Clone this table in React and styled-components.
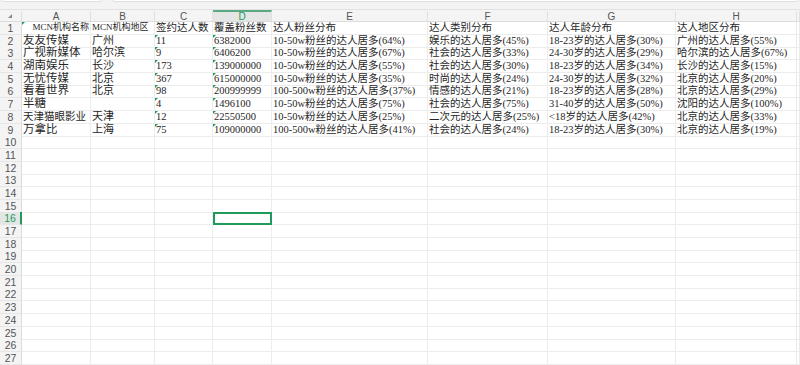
import React from 'react'
import styled, { createGlobalStyle } from 'styled-components'

const GlobalStyle = createGlobalStyle`
  html, body { margin: 0; padding: 0; background: #fff; }
  body { overflow: hidden; }
`

const COLS = '22px 69px 64px 58px 59px 156px 120px 128px 121px 1fr'
const LETTERS = ['A', 'B', 'C', 'D', 'E', 'F', 'G', 'H', '']
const ROW_H = 12.7
const GREEN = '#1f9a5a'

const rows = [
  ['MCN机构名称', 'MCN机构地区', '签约达人数', '覆盖粉丝数', '达人粉丝分布', '达人类别分布', '达人年龄分布', '达人地区分布'],
  ['友友传媒', '广州', '11', '6382000', '10-50w粉丝的达人居多(64%)', '娱乐的达人居多(45%)', '18-23岁的达人居多(30%)', '广州的达人居多(55%)'],
  ['广视新媒体', '哈尔滨', '9', '6406200', '10-50w粉丝的达人居多(67%)', '社会的达人居多(33%)', '24-30岁的达人居多(29%)', '哈尔滨的达人居多(67%)'],
  ['湖南娱乐', '长沙', '173', '139000000', '10-50w粉丝的达人居多(55%)', '社会的达人居多(30%)', '18-23岁的达人居多(34%)', '长沙的达人居多(15%)'],
  ['无忧传媒', '北京', '367', '615000000', '10-50w粉丝的达人居多(35%)', '时尚的达人居多(24%)', '24-30岁的达人居多(32%)', '北京的达人居多(20%)'],
  ['看看世界', '北京', '98', '200999999', '100-500w粉丝的达人居多(37%)', '情感的达人居多(21%)', '18-23岁的达人居多(28%)', '北京的达人居多(29%)'],
  ['半糖', '', '4', '1496100', '10-50w粉丝的达人居多(75%)', '社会的达人居多(75%)', '31-40岁的达人居多(50%)', '沈阳的达人居多(100%)'],
  ['天津猫眼影业', '天津', '12', '22550500', '10-50w粉丝的达人居多(25%)', '二次元的达人居多(25%)', '<18岁的达人居多(42%)', '北京的达人居多(33%)'],
  ['万拿比', '上海', '75', '109000000', '100-500w粉丝的达人居多(41%)', '社会的达人居多(24%)', '18-23岁的达人居多(30%)', '北京的达人居多(19%)'],
]

const Sheet = styled.div`
  width: 800px;
  height: 365px;
  overflow: hidden;
  background: #fff;
  font-family: "Liberation Serif", "Noto Sans CJK SC", serif;
`

const Toolbar = styled.div`
  display: flex;
  align-items: flex-end;
  gap: 8px;
  height: 10px;
  padding-bottom: 7px;
  box-sizing: border-box;
  background: #f3f3f3;
  overflow: hidden;
  border-bottom: 1px solid #e2e2e2;
`

const NameBox = styled.div`
  flex: 0 0 103px;
  height: 20px;
  background: #fff;
  border: 1px solid #dedede;
  border-radius: 4px;
  box-sizing: border-box;
`

const FormulaBox = styled(NameBox)`
  flex: 1;
`

const Row = styled.div`
  display: grid;
  grid-template-columns: ${COLS};
  height: ${p => p.$h}px;
`

const HeadCell = styled.div`
  position: relative;
  box-sizing: border-box;
  background: ${p => (p.$active ? '#e4e6e5' : '#f4f4f4')};
  border-right: 1px solid #e0e0e0;
  border-bottom: 1px solid #dcdcdc;
  border-top: 2px solid ${p => (p.$active ? '#5aa982' : 'transparent')};
  color: ${p => (p.$active ? GREEN : '#555')};
  font: 10px "Liberation Sans", "Noto Sans", sans-serif;
  line-height: 9px;
  text-align: center;
`

const Corner = styled(HeadCell)`
  &::after {
    content: '';
    position: absolute;
    left: 8px;
    bottom: 3px;
    border-left: 4px solid transparent;
    border-bottom: 4px solid #8a8a8a;
  }
`

const RowNum = styled.div`
  box-sizing: border-box;
  background: ${p => (p.$active ? '#e4e6e5' : '#f4f4f4')};
  border-bottom: 1px solid #e6e6e6;
  border-right: ${p => (p.$active ? `2px solid ${GREEN}` : '1px solid #dcdcdc')};
  color: ${p => (p.$active ? GREEN : '#555')};
  font: 10.5px "Liberation Sans", "Noto Sans", sans-serif;
  line-height: 12px;
  text-align: center;
`

const Cell = styled.div`
  position: relative;
  box-sizing: border-box;
  border-right: 1px solid #ececec;
  border-bottom: 1px solid #ececec;
  padding: 0 1px;
  font-size: ${p => p.$size}px;
  line-height: ${ROW_H - 1}px;
  color: #262626;
  white-space: nowrap;
  text-align: ${p => p.$align || 'left'};
  z-index: ${p => p.$z};

  ${p => p.$mark && `
    &::before {
      content: '';
      position: absolute;
      left: 0;
      top: 0;
      border-top: 3px solid #1f9a5a;
      border-right: 3px solid transparent;
    }
  `}

  ${p => p.$selected && `
    outline: 2px solid ${GREEN};
    outline-offset: -2px;
  `}
`

const sizeFor = (r, c) => {
  if (r === 0 && c < 2) return 9
  if (r === 7 && c === 0) return 10.5
  if (c === 0) return 11.5
  if (c === 1) return 11
  return 10.5
}

const App = () => {
  const allRows = Array.from({ length: 27 }, (_, i) => rows[i] || [])
  return (
    <Sheet>
      <GlobalStyle />
      <Toolbar>
        <NameBox />
        <FormulaBox />
      </Toolbar>
      <Row $h={12}>
        <Corner />
        {LETTERS.map((l, i) => (
          <HeadCell key={i} $active={l === 'D'}>{l}</HeadCell>
        ))}
      </Row>
      {allRows.map((data, r) => (
        <Row key={r} $h={ROW_H}>
          <RowNum $active={r === 15}>{r + 1}</RowNum>
          {Array.from({ length: 9 }, (_, c) => (
            <Cell
              key={c}
              $size={sizeFor(r, c)}
              $align={r === 0 && c === 0 ? 'right' : 'left'}
              $z={9 - c}
              $mark={(r === 0 && c === 0) || (r > 0 && r < 9 && (c === 2 || c === 3))}
              $selected={r === 15 && c === 3}
            >
              {data[c] || ''}
            </Cell>
          ))}
        </Row>
      ))}
    </Sheet>
  )
}

export default App
